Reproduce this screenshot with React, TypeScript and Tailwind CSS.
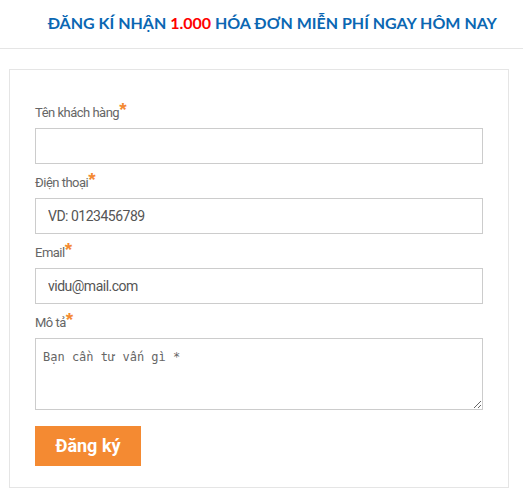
const fields = [
  { label: "Tên khách hàng", placeholder: "", type: "text" },
  { label: "Điện thoại", placeholder: "VD: 0123456789", type: "tel" },
  { label: "Email", placeholder: "vidu@mail.com", type: "email" },
];

function Label({ text }: { text: string }) {
  return (
    <label className="mb-[5px] block h-5 text-[13px] leading-5 tracking-[-0.5px] text-[#666]">
      {text}
      <span className="relative -top-px font-['Liberation_Sans',sans-serif] text-[19px] font-bold leading-[0] text-[#f48a32]">
        *
      </span>
    </label>
  );
}

export default function App() {
  return (
    <div className="min-h-[497px] w-[523px] bg-white font-['Roboto',sans-serif]">
      <div className="flex h-[49px] items-center justify-end border-b border-[#e5e5e5] pb-[3px] pr-[26px]">
        <h2 className="font-['Lato',sans-serif] text-base font-bold text-[#0b67b3]">
          ĐĂNG KÍ NHẬN <span className="text-[#ff0000]">1.000</span> HÓA ĐƠN
          MIỄN PHÍ NGAY HÔM NAY
        </h2>
      </div>

      <div className="ml-[9px] mt-5 w-[500px] border border-[#e5e5e5] px-[25px] pb-[21px] pt-[33px]">
        {fields.map((field, i) => (
          <div key={field.label} className={i > 0 ? "mt-[9px]" : ""}>
            <Label text={field.label} />
            <input
              type={field.type}
              placeholder={field.placeholder}
              className="block h-9 w-full border border-[#ccc] px-3 text-sm tracking-[-0.5px] text-[#555] outline-none placeholder:text-[#555]"
            />
          </div>
        ))}

        <div className="mt-[9px]">
          <Label text="Mô tả" />
          <textarea
            placeholder="Bạn cần tư vấn gì *"
            className="block h-[72px] w-full border border-[#ccc] px-[7px] pb-[6px] pt-[9px] font-['DejaVu_Sans_Mono',monospace] text-[12px] text-[#555] outline-none placeholder:text-[#666]"
          />
        </div>

        <button className="mt-4 h-10 w-[106px] bg-[#f48a32] text-lg font-bold text-white">
          Đăng ký
        </button>
      </div>
    </div>
  );
}
